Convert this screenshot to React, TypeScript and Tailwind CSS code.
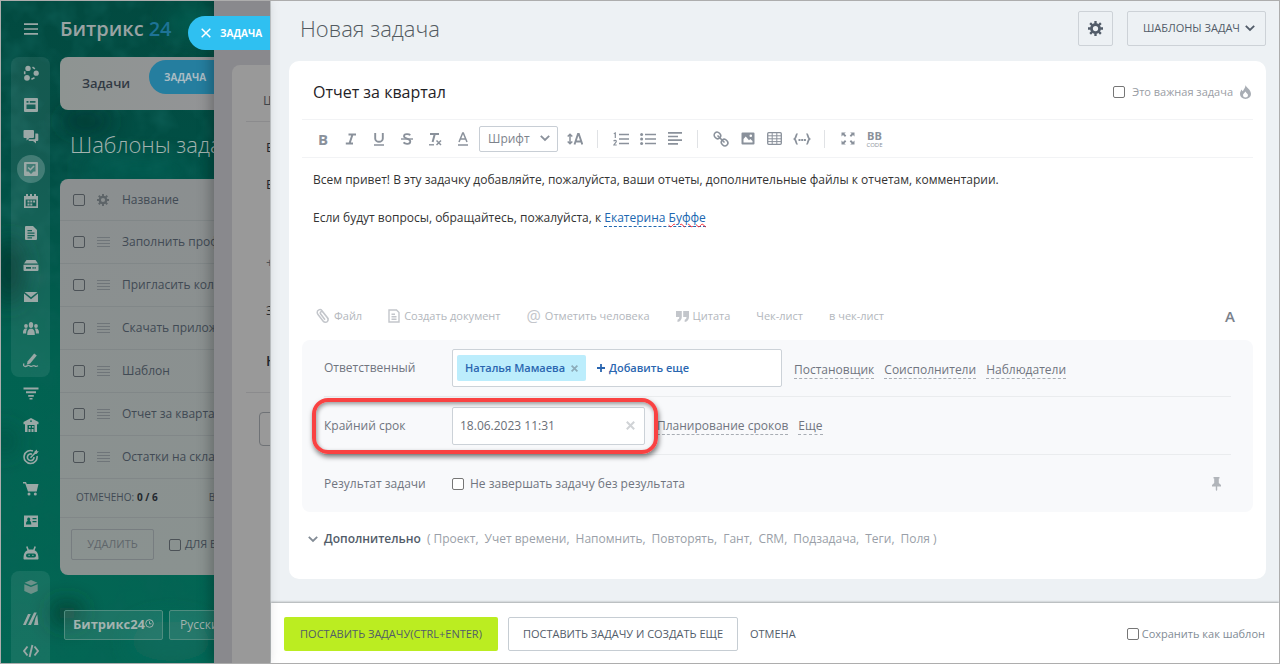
import { useState } from 'react';
import type { ReactNode } from 'react';
import clsx from 'clsx';

const templates = [
  'Заполнить профиль',
  'Пригласить коллег',
  'Скачать приложение',
  'Шаблон',
  'Отчет за квартал',
  'Остатки на складе',
];

const extraLinks = [
  'Проект,',
  'Учет времени,',
  'Напомнить,',
  'Повторять,',
  'Гант,',
  'CRM,',
  'Подзадача,',
  'Теги,',
  'Поля )',
];

function Svg({ children, size = 16 }: { children: ReactNode; size?: number }) {
  return (
    <svg width={size} height={size} viewBox="0 0 16 16" fill="currentColor" aria-hidden="true" className="shrink-0">
      {children}
    </svg>
  );
}

const stroke = { fill: 'none', stroke: 'currentColor', strokeWidth: 1.6 };

const mainMenu = [
  {
    label: 'Совместная работа',
    icon: (
      <>
        <circle cx="5" cy="3.4" r="2.7" />
        <circle cx="13.2" cy="8.2" r="2.6" />
        <circle cx="4" cy="12.8" r="2.9" />
        <path d="M9.5 2.2l2.4 1.7M1.7 6.2v3M8.4 14.2l3.1-1.4" {...stroke} />
      </>
    ),
  },
  {
    label: 'Новости',
    icon: (
      <path
        fillRule="evenodd"
        d="M2 1h12a1 1 0 011 1v12a1 1 0 01-1 1H2a1 1 0 01-1-1V2a1 1 0 011-1zm1.5 3v1.8h2V4h-2zm3.3 0v1.8h5.7V4H6.8zM3.5 7.5V12h9V7.5h-9z"
      />
    ),
  },
  {
    label: 'Чаты',
    icon: (
      <>
        <path d="M1.5 1H10a1 1 0 011 1v6a1 1 0 01-1 1H6.5l-3 2.5V9h-2a1 1 0 01-1-1V2a1 1 0 011-1z" />
        <path d="M12.3 4.5h2a1 1 0 011 1V11a1 1 0 01-1 1H13v2.500L10 12H6.500a1 1 0 01-1-1v-.7h5.800a1 1 0 001-1z" />
      </>
    ),
  },
  {
    label: 'Задачи',
    active: true,
    icon: (
      <>
        <path
          fillRule="evenodd"
          d="M2 1h12a1 1 0 011 1v12a1 1 0 01-1 1H2a1 1 0 01-1-1V2a1 1 0 011-1zm1.5 2v7.500h2L8 13l2.500-2.500h2V3h-9z"
        />
        <path d="M5.2 6.5l2.2 2.2L11 5" {...stroke} />
      </>
    ),
  },
  {
    label: 'Календарь',
    icon: (
      <>
        <path fillRule="evenodd" d="M1 3h14v12H1V3zm1.7 3.500v6.800h10.600V6.500H2.700z" />
        <path d="M3 1h2v3H3zM7 1h2v3H7zM11 1h2v3h-2zM4.5 7.500h2v2h-2zM7.300 7.500h2v2h-2zM10.100 7.500h2v2h-2zM4.500 10.500h2v2h-2zM7.300 10.500h2v2h-2z" />
      </>
    ),
  },
  {
    label: 'Документы',
    icon: (
      <path
        fillRule="evenodd"
        d="M3 1h7l4 4v9a1 1 0 01-1 1H3a1 1 0 01-1-1V2a1 1 0 011-1zm1.5 4v1.300H9V5H4.500zm0 2.500v1.300h7V7.500h-7zm0 2.500v1.300h7V10h-7zm0 2.300v1.200H9v-1.200H4.500z"
      />
    ),
  },
  {
    label: 'Диск',
    icon: (
      <>
        <path d="M3.5 3h9L15 6.500H1z" />
        <path fillRule="evenodd" d="M.5 7.700h15V13a1 1 0 01-1 1h-13a1 1 0 01-1-1V7.700zM3 10v1.700h5V10H3zm6.500 0v1.700h1.200V10H9.500zm2 0v1.700h1.200V10h-1.200z" />
      </>
    ),
  },
  {
    label: 'Почта',
    icon: <path d="M1.5 3h13L8 8.200 1.500 3zM1 4.500l7 5.700 7-5.700V13H1z" />,
  },
  {
    label: 'Группы',
    icon: (
      <>
        <ellipse cx="8" cy="4" rx="2.2" ry="3" />
        <path d="M4.2 14c0-3.500.5-5 2.500-6.200h2.600c2 1.200 2.500 2.700 2.500 6.200z" />
        <circle cx="3" cy="5" r="1.9" />
        <circle cx="13" cy="5" r="1.9" />
        <path d="M0 12.500c0-3 .5-4.300 2-5h2.300c-.9 1.500-1.100 3-1.200 5zM16 12.500c0-3-.5-4.300-2-5h-2.300c.9 1.500 1.100 3 1.200 5z" />
      </>
    ),
  },
  {
    label: 'Подпись',
    icon: (
      <>
        <path d="M11.2.5l2.600 2-6.600 8-3.500 1.200 1-3.500z" />
        <path d="M1 10.500c-1 2 0 3 1.500 3s2-1.500 3.500-1 1.500 1.500 3 .7 2-1.200 3-.2 2 .3 3-.3" {...stroke} strokeWidth="1.3" />
      </>
    ),
  },
];

const middleMenu = [
  {
    label: 'CRM',
    icon: <path d="M.5 2.500h15v2H.5zM3 6.300h10v2H3zM5.200 10h5.600v1.800H5.200zM6.500 13h3v1.500h-3z" />,
  },
  {
    label: 'Склад',
    icon: (
      <path
        fillRule="evenodd"
        d="M8 1l7.500 4v2.300H14V15h-2.500V8h-7v7H2V7.300H.5V5zm-.9 2.500v1.300h1.800V3.500zM6 9h1.700v1.700H6zm3 0h1.700v1.700H9zM5.500 12h2v3h-2zm3 0h2v3h-2z"
      />
    ),
  },
  {
    label: 'Маркетинг',
    icon: (
      <>
        <path d="M10 2A6.500 6.500 0 1014 7" {...stroke} />
        <path d="M9 5.200A3.300 3.300 0 1011 8" {...stroke} />
        <path d="M7.5 8.700l5-5.200" {...stroke} />
        <path d="M11.5 2.500L14 .5v1.700h1.800L13.500 5h-2z" />
      </>
    ),
  },
  {
    label: 'Магазин',
    icon: (
      <>
        <path d="M0 1h3l.8 2h11.700l-1.800 7.500H5L2.200 2.600H0z" />
        <circle cx="6" cy="13" r="1.5" />
        <circle cx="12.3" cy="13" r="1.5" />
      </>
    ),
  },
  {
    label: 'Сотрудники',
    icon: (
      <path
        fillRule="evenodd"
        d="M1 2.500h14V14H1V2.500zM5.700 4.500a1.700 1.900 0 00-1 3.300C3.500 8.400 3 9.500 3 11.500h5.300c0-2-.5-3.100-1.600-3.700a1.700 1.900 0 00-1-3.300zM9.500 5v1.300h4V5h-4zm0 3v1.300h4V8h-4z"
      />
    ),
  },
  {
    label: 'Роботы',
    icon: (
      <>
        <path d="M3.8 1.500l1.500 4M12.200 1.500l-1.500 4" {...stroke} />
        <path
          fillRule="evenodd"
          d="M.5 13.500c0-6.500 3-9 7.500-9s7.500 2.500 7.500 9c0 .6-.4 1-1 1h-13c-.6 0-1-.4-1-1zM5 8.500a2 2 0 000 4h6a2 2 0 000-4H5zm.5 1.200h1.200v1.200H5.500zm3.800 0h1.200v1.200H9.300z"
        />
      </>
    ),
  },
];

const bottomMenu = [
  {
    label: 'Маркет',
    dim: true,
    icon: <path d="M8 1l6.500 2.800L8 6.500 1.500 3.800zM1.300 5.200L7.900 8l6.800-2.800V12L8 15l-6.700-3z" />,
  },
  {
    label: 'Сайты',
    icon: <path d="M0 14L5 3h2.800l-5 11zM5 14l6-12.500h2.800L8 14zM11 14l1.500-7 1.800-3.500 1 10.500z" />,
  },
  {
    label: 'Разработчикам',
    icon: <path d="M4.5 3.500L1 8l3.500 4.500M11.500 3.500L15 8l-3.500 4.500M9.400 2L6.600 14" {...stroke} strokeWidth="1.9" />,
  },
];

function MenuItem({ item }: { item: any }) {
  return (
    <a href="#" aria-label={item.label} className="flex h-8 shrink-0 items-center justify-center">
      <span
        className={clsx(
          'flex h-7 w-7 items-center justify-center rounded-full',
          item.active && 'bg-white/20',
          item.dim ? 'text-[#6c9189]' : 'text-[#9aa8a6]',
        )}
      >
        <Svg>{item.icon}</Svg>
      </span>
    </a>
  );
}

function Chevron({ size = 10 }: { size?: number }) {
  return (
    <svg width={size} height={size} viewBox="0 0 10 10" fill="none" stroke="currentColor" strokeWidth="1.8" aria-hidden="true">
      <path d="M.8 2.800L5 7l4.200-4.200" />
    </svg>
  );
}

function Gear({ size }: { size: number }) {
  return (
    <svg width={size} height={size} viewBox="0 0 16 16" fill="none" stroke="currentColor" aria-hidden="true">
      <circle cx="8" cy="8" r="4.3" strokeWidth="3" />
      <path
        d="M8 0v3M8 13v3M0 8h3M13 8h3M2.300 2.300l2.200 2.200M11.500 11.500l2.200 2.200M2.300 13.700l2.200-2.200M11.500 4.500l2.200-2.200"
        strokeWidth="2.5"
      />
    </svg>
  );
}

function Checkbox({ className }: { className?: string }) {
  return (
    <input
      type="checkbox"
      aria-label="Выбрать"
      className={clsx('h-3 w-3 shrink-0 appearance-none rounded-xs border', className || 'border-[#767676] bg-white')}
    />
  );
}

function Tool({ label, wide, children }: { label: string; wide?: boolean; children: ReactNode }) {
  return (
    <button aria-label={label} className={clsx('flex h-7 items-center justify-center', wide ? 'w-7' : 'w-[27px]')}>
      {children}
    </button>
  );
}

function Separator() {
  return <span className="mx-[9px] h-[18px] w-px bg-[#e0e2e5]" />;
}

function DashedLink({ children }: { children: ReactNode }) {
  return (
    <a href="#" className="border-b border-dashed border-[#a8adb4] leading-4 text-[#70757f]">
      {children}
    </a>
  );
}

function Toolbar() {
  return (
    <div className="flex h-[39px] items-center border-y border-[#f2f3f5] pl-[7px] text-[#8a919b]">
      <Tool label="Полужирный" wide><b className="text-[15px] leading-5">B</b></Tool>
      <Tool label="Курсив" wide>
        <svg width="12" height="12" viewBox="0 0 12 12" fill="none" stroke="currentColor" strokeWidth="2" aria-hidden="true">
          <path d="M3.5 1.500H11M.8 10.500H8M7.500 1.500l-3 9" />
        </svg>
      </Tool>
      <Tool label="Подчеркнутый" wide>
        <svg width="12" height="14" viewBox="0 0 12 14" fill="none" stroke="currentColor" aria-hidden="true">
          <path d="M2.2 1v5.500a3.800 3.300 0 007.600 0V1" strokeWidth="1.9" />
          <path d="M1 13h10" strokeWidth="1.5" />
        </svg>
      </Tool>
      <Tool label="Зачеркнутый" wide>
        <svg width="12" height="12" viewBox="0 0 12 12" fill="none" stroke="currentColor" strokeWidth="1.8" aria-hidden="true">
          <path d="M9.300 2.300C8 .7 3 .6 3 3.200c0 2.800 6.300 2 6.300 5.200 0 3.200-5.200 3-6.800 1" />
          <path d="M0 6h12" strokeWidth="1.4" />
        </svg>
      </Tool>
      <Tool label="Очистить формат" wide>
        <svg width="14" height="14" viewBox="0 0 14 14" fill="none" stroke="currentColor" aria-hidden="true">
          <path d="M2 2h9M6.800 2L4.600 10" strokeWidth="2" />
          <path d="M1 12.800h5" strokeWidth="1.4" />
          <path d="M8.500 8.500l4.500 4.500M13 8.500L8.500 13" strokeWidth="1.5" />
        </svg>
      </Tool>
      <Tool label="Цвет текста" wide>
        <svg width="12" height="14" viewBox="0 0 12 14" fill="none" stroke="currentColor" aria-hidden="true">
          <path d="M2 10L5.700 1h.6L10 10M3.500 7h5" strokeWidth="1.5" />
          <path d="M1 13h10" strokeWidth="1.5" />
        </svg>
      </Tool>
      <div className="relative mr-[3px] ml-[2px]">
        <select aria-label="Шрифт" className="h-[26px] w-[79px] appearance-none rounded-xs border border-[#c8ced5] pl-2 text-xs text-[#7d838c]">
          <option>Шрифт</option>
        </select>
        <span className="pointer-events-none absolute top-2 right-2"><Chevron /></span>
      </div>
      <Tool label="Размер шрифта">
        <svg width="16" height="12" viewBox="0 0 16 12" fill="none" stroke="currentColor" aria-hidden="true">
          <path d="M3 1.500v9M.7 3.500L3 1.200l2.300 2.300M.7 8.500L3 10.800l2.300-2.300" strokeWidth="1.5" />
          <path d="M7.500 11.500L11 1h.8l3.500 10.500M8.800 8.500H14" strokeWidth="1.9" />
        </svg>
      </Tool>
      <Separator />
      <Tool label="Нумерованный список">
        <svg width="16" height="14" viewBox="0 0 16 14" fill="none" stroke="currentColor" aria-hidden="true">
          <path d="M6 2.500h10M6 7h10M6 11.500h10" strokeWidth="1.7" />
          <path d="M.8 1.800L2.300 1v5M.7 9.200c.5-1.200 2.800-1 2.600.3C3.200 10.500 1 12 .8 13h2.900" strokeWidth="1.2" />
        </svg>
      </Tool>
      <Tool label="Маркированный список">
        <svg width="16" height="14" viewBox="0 0 16 14" fill="currentColor" aria-hidden="true">
          <path d="M5 1.700h11v1.600H5zM5 6.200h11v1.600H5zM5 10.700h11v1.600H5z" />
          <circle cx="1.600" cy="2.500" r="1.5" />
          <circle cx="1.600" cy="7" r="1.5" />
          <circle cx="1.600" cy="11.500" r="1.5" />
        </svg>
      </Tool>
      <Tool label="Выравнивание">
        <svg width="14" height="13" viewBox="0 0 14 13" fill="currentColor" aria-hidden="true">
          <path d="M0 0h14v1.700H0zM0 3.700h10v1.600H0zM0 7.300h14V9H0zM0 11h10v1.700H0z" />
        </svg>
      </Tool>
      <Separator />
      <Tool label="Ссылка">
        <svg width="16" height="16" viewBox="0 0 16 16" fill="none" stroke="currentColor" strokeWidth="1.6" aria-hidden="true">
          <ellipse cx="4.400" cy="4.400" rx="3" ry="3.400" transform="rotate(-45 4.400 4.400)" />
          <ellipse cx="11.600" cy="11.600" rx="3" ry="3.400" transform="rotate(-45 11.600 11.600)" />
          <path d="M4.500 4.500l7 7" />
        </svg>
      </Tool>
      <Tool label="Изображение">
        <svg width="14" height="13" viewBox="0 0 14 13" fill="currentColor" aria-hidden="true">
          <path fillRule="evenodd" d="M1.500.5h11a1 1 0 011 1v10a1 1 0 01-1 1h-11a1 1 0 01-1-1v-10a1 1 0 011-1zM9.800 2.500a1.300 1.300 0 100 2.600 1.300 1.300 0 000-2.600zM2.500 10.500h9V9L9.300 7 8 8.200 4.700 4.500 2.500 7z" />
        </svg>
      </Tool>
      <Tool label="Таблица">
        <svg width="15" height="13" viewBox="0 0 15 13" fill="none" stroke="currentColor" aria-hidden="true">
          <rect x=".7" y=".7" width="13.6" height="11.6" rx="1" strokeWidth="1.3" />
          <path d="M1 3.800h13M1 6.800h13M1 9.600h13M5.200 1v11M9.800 1v11" />
        </svg>
      </Tool>
      <Tool label="Код">
        <svg width="18" height="12" viewBox="0 0 18 12" fill="none" stroke="currentColor" strokeWidth="1.8" aria-hidden="true">
          <path d="M4.500 1C2.500 1 3.800 4.500 1.500 6c2.300 1.500 1 5 3 5M13.500 1c2 0 .7 3.500 3 5-2.300 1.500-1 5-3 5" />
          <path d="M5.500 7h2M8.200 7h2M10.900 7h2" />
        </svg>
      </Tool>
      <Separator />
      <Tool label="На весь экран">
        <svg width="14" height="13" viewBox="0 0 14 13" fill="currentColor" aria-hidden="true">
          <path d="M.5.5h4.300L3.400 1.800 5.300 3.600 4 5 2 3 .5 4.600zM13.500.5H9.200l1.400 1.300-1.900 1.800L10 5l2-2 1.500 1.600zM.5 12.500h4.300l-1.400-1.300 1.900-1.800L4 8l-2 2-1.500-1.600zM13.500 12.500H9.200l1.400-1.300-1.900-1.800L10 8l2 2 1.500-1.600z" />
        </svg>
      </Tool>
      <Tool label="BB-код">
        <span className="flex flex-col items-center">
          <b className="text-[11px] leading-3">BB</b>
          <span className="text-[6px] leading-[6px]">CODE</span>
        </span>
      </Tool>
    </div>
  );
}

// deep green sea wallpaper, already dimmed by the overlay of the open slider
function Backdrop() {
  return (
    <svg className="absolute inset-0 h-full w-full" preserveAspectRatio="none" viewBox="0 0 213 662" aria-hidden="true">
      <defs>
        <linearGradient id="sea" x1="0" y1="0" x2="0" y2="1">
          <stop offset="0" stopColor="#024a40" />
          <stop offset=".25" stopColor="#014f45" />
          <stop offset=".55" stopColor="#016251" />
          <stop offset="1" stopColor="#036654" />
        </linearGradient>
        <filter id="soft" x="-50%" y="-50%" width="200%" height="200%">
          <feGaussianBlur stdDeviation="11" />
        </filter>
        <filter id="waves" x="0" y="0" width="100%" height="100%">
          <feTurbulence type="fractalNoise" baseFrequency="0.035" numOctaves="3" seed="7" />
          <feColorMatrix values="0 0 0 0 0.005  0 0 0 0 0.12  0 0 0 0 0.1  2.6 0 0 0 -1.1" />
        </filter>
      </defs>
      <rect width="213" height="662" fill="url(#sea)" />
      <rect width="213" height="330" filter="url(#waves)" opacity=".6" />
      <rect y="330" width="213" height="332" filter="url(#waves)" opacity=".2" />
      <g filter="url(#soft)">
        <ellipse cx="190" cy="22" rx="24" ry="12" fill="#035d50" />
        <ellipse cx="85" cy="120" rx="26" ry="8" fill="#02332d" />
        <ellipse cx="140" cy="168" rx="60" ry="9" fill="#015f52" />
        <ellipse cx="8" cy="270" rx="14" ry="34" fill="#023a32" />
        <ellipse cx="4" cy="440" rx="8" ry="12" fill="#02493d" />
        <ellipse cx="66" cy="612" rx="16" ry="10" fill="#07392b" />
        <ellipse cx="170" cy="640" rx="40" ry="20" fill="#0a6b5c" />
      </g>
    </svg>
  );
}

function TemplatesPage() {
  return (
    <div className="relative flex w-[213px] shrink-0 overflow-hidden">
      <Backdrop />
      <nav className="relative flex w-[59px] shrink-0 flex-col px-[10px]">
        <button aria-label="Меню" className="flex h-14 shrink-0 items-center justify-center text-[#9aa8a6]">
          <Svg><path d="M1 2.300h14v1.600H1zM1 7.200h14v1.600H1zM1 12.100h14v1.600H1z" /></Svg>
        </button>
        <div className="rounded-lg bg-white/8">
          {mainMenu.map((item) => <MenuItem key={item.label} item={item} />)}
        </div>
        {middleMenu.map((item) => <MenuItem key={item.label} item={item} />)}
        <div className="mt-[2px] rounded-lg bg-white/8 pb-8">
          {bottomMenu.map((item) => <MenuItem key={item.label} item={item} />)}
        </div>
      </nav>

      <div className="relative w-[154px] shrink-0 whitespace-nowrap">
        <div className="flex h-14 items-center text-xl font-semibold text-[#9aa3a3]">
          Битрикс<span className="ml-[5px] text-[#1e7396]">24</span>
        </div>
        <div className="relative flex h-[53px] items-center rounded-l-lg bg-linear-to-r from-[#8e9492] to-[#939496] pl-[22px] text-[13px] font-semibold text-[#323a44]">
          Задачи
          <span className="absolute top-[3px] right-0 flex h-[34px] w-[65px] items-center rounded-l-full bg-[#257e9f] pl-[15px] text-[10px] font-bold text-[#a9bcc4]">
            ЗАДАЧА
          </span>
        </div>
        <h2 className="flex h-[69px] items-center pl-[10px] text-[22px] font-light text-[#a3b3af]">Шаблоны задач</h2>

        <div className="overflow-hidden rounded-l-lg bg-linear-to-b from-[#8b8f90] to-[#8a9290] text-xs text-[#414a54]">
          <div className="flex h-[42px] items-center border-b border-[#818788] pl-[13px]">
            <Checkbox className="border-[#4c5257]" />
            <span className="ml-3 text-[#5d6468]"><Gear size={12} /></span>
            <span className="ml-[13px]">Название</span>
          </div>
          {templates.map((name) => (
            <div key={name} className="flex h-[43px] items-center border-b border-[#818788] pl-[13px]">
              <Checkbox className="border-[#4c5257]" />
              <svg width="13" height="11" viewBox="0 0 13 11" fill="#6f7579" className="ml-3 shrink-0" aria-hidden="true">
                <path d="M0 0h13v1H0zM0 3h13v1H0zM0 6h13v1H0zM0 9h13v1H0z" />
              </svg>
              <span className="ml-3">{name}</span>
            </div>
          ))}
          <div className="flex h-[39px] items-center border-b border-[#818788] pl-4 text-[11px]">
            <span className="text-[10px]">ОТМЕЧЕНО:</span>&nbsp;<b className="text-[10px] text-[#22282e]">0 / 6</b>
            <span className="ml-[51px] text-[10px]">ВСЕГО: 6</span>
          </div>
          <div className="flex h-[57px] items-center pb-1 pl-[11px]">
            <button className="h-[31px] w-[83px] shrink-0 rounded-xs border border-[#777d80] text-[11px] text-[#5f666b]">УДАЛИТЬ</button>
            <label className="ml-[15px] flex items-center gap-1 text-[11px]">
              <Checkbox className="border-[#4c5257]" /> ДЛЯ ВСЕХ
            </label>
          </div>
        </div>

        <div className="mt-[35px] flex gap-[6px] pl-1">
          <a href="#" className="flex h-[30px] w-[99px] shrink-0 items-center rounded-xs border border-[#4f8d80] bg-white/10 pl-2 text-[13px] font-bold text-[#a3b3af]">
            Битрикс24
            <svg width="9" height="9" viewBox="0 0 9 9" fill="none" stroke="currentColor" className="mb-1 shrink-0" aria-hidden="true">
              <circle cx="4.5" cy="4.5" r="3.8" />
              <path d="M4.500 2.300v2.500h2" />
            </svg>
          </a>
          <a href="#" className="flex h-[30px] shrink-0 items-center rounded-xs border border-[#4f8d80] bg-white/10 px-[10px] text-xs text-[#a3b3af]">
            Русский
          </a>
        </div>
      </div>
    </div>
  );
}

function PreviousSlider() {
  return (
    <div className="relative w-14 shrink-0">
      <div className="h-full overflow-hidden bg-[#89898d] pt-16 pl-[18px] shadow-[-4px_0_12px_rgba(0,0,0,0.25)]">
        <div className="h-full w-60 rounded-tl-lg bg-[#999999] pl-[14px] text-[13px] text-[#20262c]">
          <p className="h-[57px] border-b border-[#8b8b8d] pt-[26px] pl-[17px] text-[#3f454b]">Шаблон</p>
          <p className="h-[37px] pt-4 pl-[20px]">Ежедневный</p>
          <p className="h-[78px] pt-4 pl-[20px]">Ежемесячный</p>
          <p className="h-12 pt-4 pl-[20px] text-[#4c5257]">+ Добавить</p>
          <p className="h-[50px] pt-4 pl-[20px]">Завершить</p>
          <p className="h-[58px] border-b border-[#8b8b8d] pt-4 pl-[20px] text-sm font-semibold">Напоминание</p>
          <div className="mt-[19px] ml-[13px] h-[34px] rounded-sm border border-[#6f7276]" />
        </div>
      </div>
      <div className="absolute top-[15px] right-0 flex h-[34px] w-[82px] items-center rounded-l-full bg-[#2fc0f1] pl-[13px] text-[10px] font-bold text-white">
        <button aria-label="Закрыть">
          <svg width="10" height="10" viewBox="0 0 10 10" fill="none" stroke="currentColor" strokeWidth="1.5" aria-hidden="true">
            <path d="M.7.7l8.600 8.600M9.300.7L.7 9.300" />
          </svg>
        </button>
        <span className="ml-[9px]">ЗАДАЧА</span>
      </div>
    </div>
  );
}

function AttachBar() {
  return (
    <div className="flex h-12 items-center gap-[26px] px-[14px] text-[11px] text-[#b3b7bd]">
      <button className="flex items-center gap-1">
        <svg width="14" height="16" viewBox="0 0 14 16" fill="none" stroke="#c3c6cb" strokeWidth="1.5" aria-hidden="true">
          <path d="M12.500 11L6 2.600C4.300.5 1 2 1.200 4.500c0 1 .4 1.500 1 2.300l5 6.400c1.200 1.500 3.200 1.400 4.200.3s.9-2.500 0-3.700L7 4.200c-1.300-1.500-3.600 0-2.500 1.600l4.500 6" />
        </svg>
        Файл
      </button>
      <button className="flex items-center gap-1">
        <svg width="12" height="14" viewBox="0 0 12 14" fill="none" stroke="#c3c6cb" strokeWidth="1.4" aria-hidden="true">
          <path d="M1 1h7.500L11 3.500V13H1zM3.500 5.300H7M3.500 7.800h5M3.500 10.300h5" />
        </svg>
        Создать документ
      </button>
      <button className="flex items-center gap-1">
        <span className="text-base leading-4 text-[#c3c6cb]">@</span>
        Отметить человека
      </button>
      <button className="flex items-center gap-1">
        <svg width="13" height="11" viewBox="0 0 13 11" fill="#c3c6cb" aria-hidden="true">
          <path d="M0 0h5.800v6c0 2.700-1.500 4.500-4.300 5V8.700c1.300-.5 1.800-1.200 1.800-2.700H0zM7.200 0H13v6c0 2.700-1.500 4.500-4.300 5V8.700c1.300-.5 1.800-1.200 1.800-2.700H7.200z" />
        </svg>
        Цитата
      </button>
      <button>Чек-лист</button>
      <button>в чек-лист</button>
      <button className="mr-1 ml-auto text-[15px] font-semibold text-[#7a818b]">A</button>
    </div>
  );
}

function TaskFields() {
  const [deadline, setDeadline] = useState('18.06.2023 11:31');

  return (
    <div className="rounded-lg bg-[#f8f9fb] px-[22px] text-xs text-[#70757f]">
      <div className="flex h-[57px] items-center border-b border-[#eaecee]">
        <span className="w-32 shrink-0">Ответственный</span>
        <div className="flex h-[38px] w-[330px] items-center rounded-xs border border-[#ccd2d8] bg-white pl-1 text-[11px] font-semibold text-[#2a66b0]">
          <span className="flex h-[26px] w-[129px] items-center justify-between rounded-xs bg-[#bcedfc] px-2">
            Наталья Мамаева
            <button aria-label="Убрать" className="text-[#8cabb9]">
              <svg width="7" height="7" viewBox="0 0 7 7" fill="none" stroke="currentColor" strokeWidth="1.7" aria-hidden="true">
                <path d="M.6.6l5.800 5.800M6.400.6L.6 6.400" />
              </svg>
            </button>
          </span>
          <button className="ml-[11px] flex items-center gap-1">
            <svg width="8" height="8" viewBox="0 0 8 8" stroke="currentColor" strokeWidth="1.8" aria-hidden="true">
              <path d="M4 0v8M0 4h8" />
            </svg>
            Добавить еще
          </button>
        </div>
        <div className="ml-3 flex gap-[10px] pt-1">
          <DashedLink>Постановщик</DashedLink>
          <DashedLink>Соисполнители</DashedLink>
          <DashedLink>Наблюдатели</DashedLink>
        </div>
      </div>

      <div className="relative flex h-[58px] items-center border-b border-[#eaecee]">
        <label htmlFor="deadline" className="w-32 shrink-0">Крайний срок</label>
        <div className="relative">
          <input
            id="deadline"
            value={deadline}
            onChange={(e) => setDeadline(e.target.value)}
            className="h-[38px] w-[193px] rounded-xs border border-[#ccd2d8] bg-white pl-[7px] text-xs text-[#6a6f78]"
          />
          <button aria-label="Очистить" onClick={() => setDeadline('')} className="absolute top-[14px] right-[10px] text-[#d0d3d6]">
            <svg width="9" height="9" viewBox="0 0 9 9" fill="none" stroke="currentColor" strokeWidth="2" aria-hidden="true">
              <path d="M.8.8l7.400 7.400M8.200.8L.8 8.200" />
            </svg>
          </button>
        </div>
        <div className="ml-3 flex gap-[10px] pt-[2px]">
          <DashedLink>Планирование сроков</DashedLink>
          <DashedLink>Еще</DashedLink>
        </div>
        {/* highlight frame over the deadline field */}
        <div className="pointer-events-none absolute top-px -left-3 h-14 w-[346px] rounded-2xl border-4 border-[#f94242] shadow-[1px_3px_5px_rgba(0,0,0,0.5),inset_1px_2px_4px_rgba(0,0,0,0.4)]" />
      </div>

      <div className="flex h-[57px] items-center">
        <span className="w-32 shrink-0">Результат задачи</span>
        <label className="flex items-center gap-[6px]">
          <Checkbox />
          Не завершать задачу без результата
        </label>
        <button aria-label="Закрепить" className="mr-[10px] ml-auto text-[#b1b5ba]">
          <svg width="9" height="14" viewBox="0 0 9 14" fill="currentColor" aria-hidden="true">
            <path d="M1.500 0h6v1.500H6.800V6L9 8v1.500H5.200V13l-.7 1-.7-1V9.500H0V8l2.200-2V1.500h-.7z" />
          </svg>
        </button>
      </div>
    </div>
  );
}

function TaskSlider() {
  const [title, setTitle] = useState('Отчет за квартал');

  return (
    <main className="flex min-w-0 flex-1 flex-col border-l border-[#c4c8ca] bg-[#edf1f4]">
      <header className="flex h-[60px] shrink-0 items-center pr-[13px] pb-[6px] pl-[29px]">
        <h1 className="text-[22px] font-light text-[#525a60]">Новая задача</h1>
        <button aria-label="Настройки" className="ml-auto flex h-[35px] w-[35px] items-center justify-center rounded-xs border border-[#cdd2d7] text-[#525c69]">
          <Gear size={15} />
        </button>
        <button className="ml-[14px] flex h-[35px] w-[139px] items-center justify-end gap-[5px] rounded-xs border border-[#cdd2d7] pr-[10px] text-[11px] font-medium text-[#525c69]">
          ШАБЛОНЫ ЗАДАЧ
          <Chevron />
        </button>
      </header>

      <section className="mr-[13px] ml-[18px] rounded-[10px] bg-white px-[13px] pb-[14px]">
        <div className="flex h-[58px] items-center pt-1 pr-[2px] pl-[11px]">
          <input
            aria-label="Название задачи"
            value={title}
            onChange={(e) => setTitle(e.target.value)}
            className="min-w-0 flex-1 text-base text-[#1f2226]"
          />
          <label className="flex items-center gap-[7px] text-[11px] text-[#9a9ea5]">
            <Checkbox />
            Это важная задача
            <svg width="11" height="14" viewBox="0 0 11 14" fill="#a8adb4" aria-hidden="true">
              <path fillRule="evenodd" d="M5.500 0C6 2.500 11 4.500 11 9a5.500 5 0 01-11 0c0-2 .8-3.500 2-4.500 0 1 .3 1.500.8 1.800C3.500 4.500 5.500 3 5.500 0zM5.600 6.500C4.300 8 3 8.800 3 10.300a2.500 2.300 0 005 0c0-1.500-1.700-2-2.400-3.800z" />
            </svg>
          </label>
        </div>

        <Toolbar />

        <div role="textbox" className="h-[134px] px-[11px] pt-3 text-xs leading-[19px] text-[#333]">
          <p>Всем привет! В эту задачку добавляйте, пожалуйста, ваши отчеты, дополнительные файлы к отчетам, комментарии.</p>
          <p className="mt-[19px]">
            Если будут вопросы, обращайтесь, пожалуйста, к{' '}
            <a href="#" className="border-b border-dashed border-[#2067b0] text-[#2067b0]">
              Екатерина <span className="underline decoration-red-500 decoration-wavy decoration-1">Буффе</span>
            </a>
          </p>
        </div>

        <AttachBar />
        <TaskFields />

        <div className="flex h-[53px] items-center pl-[6px] text-xs">
          <button className="flex items-center gap-[6px] font-semibold text-[#525c69]">
            <span className="text-[#828b95]"><Chevron /></span>
            Дополнительно
          </button>
          <div className="ml-[6px] flex gap-[6px] text-[#9a9fa8]">
            <span>( <a href="#">{extraLinks[0]}</a></span>
            {extraLinks.slice(1).map((link) => (
              <a key={link} href="#">{link}</a>
            ))}
          </div>
        </div>
      </section>

      <footer className="mt-auto flex h-[60px] shrink-0 items-center bg-white pt-[2px] pr-[14px] pl-[13px] text-[11px] font-medium text-[#525c69] shadow-[0_-1px_2px_rgba(0,0,0,0.3)]">
        <button className="h-[34px] w-[214px] rounded-xs bg-[#bbed21]">ПОСТАВИТЬ ЗАДАЧУ(CTRL+ENTER)</button>
        <button className="ml-[10px] h-[34px] w-[230px] rounded-xs border border-[#c6cdd3]">ПОСТАВИТЬ ЗАДАЧУ И СОЗДАТЬ ЕЩЕ</button>
        <button className="ml-3">ОТМЕНА</button>
        <label className="ml-auto flex items-center gap-[3px] font-normal text-[#828b95]">
          <Checkbox />
          Сохранить как шаблон
        </label>
      </footer>
    </main>
  );
}

export default function App() {
  return (
    <div className="flex h-screen overflow-hidden border border-[#adadad] font-['Open_Sans',sans-serif]">
      <TemplatesPage />
      <PreviousSlider />
      <TaskSlider />
    </div>
  );
}
